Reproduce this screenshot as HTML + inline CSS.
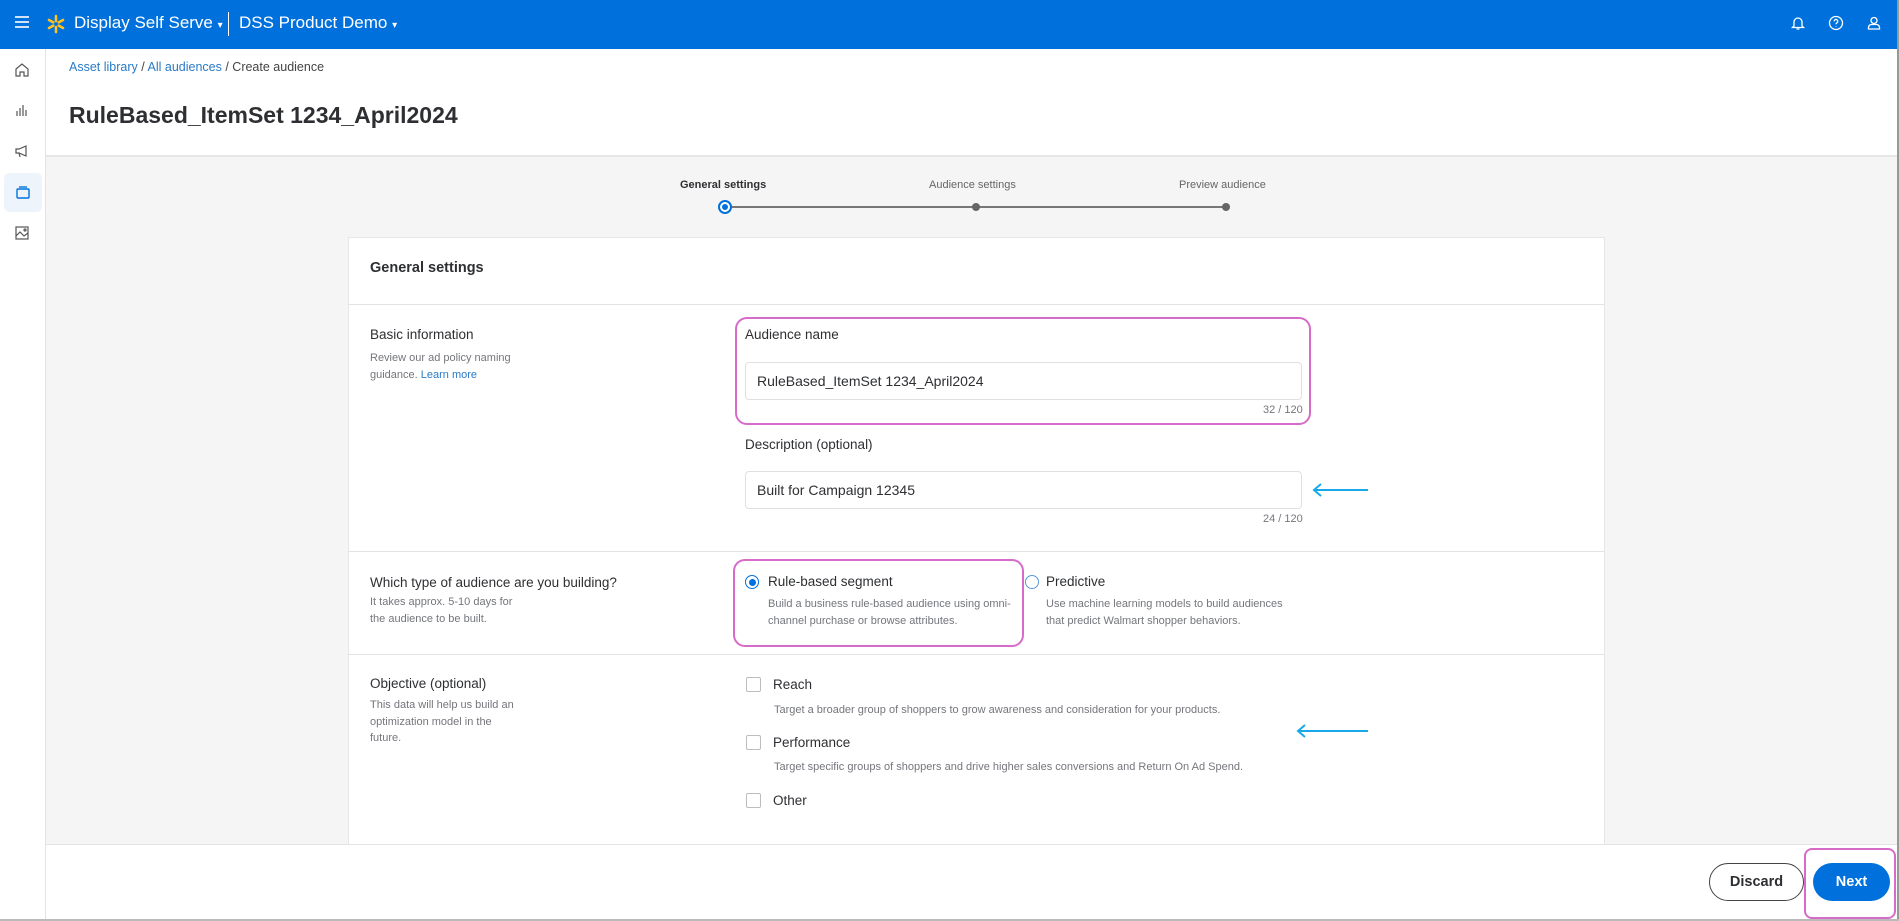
<!DOCTYPE html>
<html><head><meta charset="utf-8"><style>
*{box-sizing:border-box;margin:0;padding:0}
body{width:1899px;height:921px;overflow:hidden;background:#f5f5f5;font-family:"Liberation Sans",sans-serif;color:#2e2f32;position:relative}
.a{position:absolute;white-space:nowrap}
.top{left:0;top:0;width:1899px;height:49px;background:#0071dc;color:#fff}
.side{left:0;top:49px;width:46px;height:872px;background:#fff;border-right:1px solid #e3e3e3}
.hdr{left:46px;top:49px;width:1851px;height:108px;background:#fff;border-bottom:2px solid #e6e6e6}
.card{left:348px;top:237px;width:1257px;height:607px;background:#fff;border:1px solid #e6e6e6;border-bottom:none}
.hr{position:absolute;left:348px;width:1257px;height:1px;background:#e3e3e3}
.lbl{font-size:13.5px;color:#2e2f32}
.sub{font-size:11px;color:#74767c;line-height:16.5px}
.inp{border:1px solid #e0e0e0;border-radius:4px;background:#fff;width:557px;height:38px;font-size:14px;padding:10px 11px;color:#2e2f32}
.cnt{font-size:11px;color:#74767c}
.pink{border:2px solid #d66bc8;border-radius:12px}
.cb{width:15px;height:15px;border:1px solid #bdbdbd;border-radius:2px;background:#fff}
.foot{left:46px;top:844px;width:1851px;height:77px;background:#fff;border-top:1px solid #e3e3e3}
</style></head><body>
<div class="a top">
 <div class="a" style="left:15px;top:16px;width:14px;height:2px;background:#cfe2f7;box-shadow:0 5px 0 #cfe2f7,0 10px 0 #cfe2f7"></div>
 <svg class="a" style="left:46px;top:14px" width="20" height="20" viewBox="0 0 20 20"><g stroke="#ffc220" stroke-width="2.6" stroke-linecap="round"><line x1="10" y1="2" x2="10" y2="7"/><line x1="10" y1="13" x2="10" y2="18"/><line x1="3" y1="6" x2="7.3" y2="8.4"/><line x1="12.7" y1="11.6" x2="17" y2="14"/><line x1="3" y1="14" x2="7.3" y2="11.6"/><line x1="12.7" y1="8.4" x2="17" y2="6"/></g></svg>
 <div class="a" style="left:74px;top:13px;font-size:17px">Display Self Serve <span style="font-size:10px">▾</span></div>
 <div class="a" style="left:228px;top:12px;width:1px;height:24px;background:#fff"></div>
 <div class="a" style="left:239px;top:13px;font-size:17px">DSS Product Demo <span style="font-size:10px">▾</span></div>
 <svg class="a" style="left:1790px;top:15px" width="16" height="16" viewBox="0 0 16 16" fill="none" stroke="#fff" stroke-width="1.3"><path d="M4 11V7a4 4 0 018 0v4l1.5 1.5h-11z M6.5 14h3"/></svg>
 <svg class="a" style="left:1828px;top:15px" width="16" height="16" viewBox="0 0 16 16" fill="none" stroke="#fff" stroke-width="1.3"><circle cx="8" cy="8" r="6.5"/><path d="M6.2 6.3a1.8 1.8 0 113 1.3c-.8.5-1.2.8-1.2 1.6M8 11v.5"/></svg>
 <svg class="a" style="left:1866px;top:15px" width="16" height="16" viewBox="0 0 16 16" fill="none" stroke="#fff" stroke-width="1.3"><circle cx="8" cy="5.5" r="3"/><path d="M2.5 14v-1.5a3 3 0 013-3h5a3 3 0 013 3V14z"/></svg>
</div>
<div class="a side">
 <svg class="a" style="left:14px;top:13px" width="16" height="16" viewBox="0 0 16 16" fill="none" stroke="#555" stroke-width="1.2"><path d="M2 7l6-5 6 5v7H10v-4H6v4H2z"/></svg>
 <svg class="a" style="left:15px;top:54px" width="14" height="14" viewBox="0 0 14 14" fill="none" stroke="#555" stroke-width="1.2"><path d="M2 13V8M5 13V5M8 13V2M11 13V7"/></svg>
 <svg class="a" style="left:14px;top:94px" width="16" height="16" viewBox="0 0 16 16" fill="none" stroke="#555" stroke-width="1.2"><path d="M2 6h3l7-3v10l-7-3H2z M5 10l1 4"/></svg>
 <div class="a" style="left:4px;top:124px;width:38px;height:39px;background:#eef4fb;border-radius:5px"></div>
 <svg class="a" style="left:15px;top:135px" width="16" height="16" viewBox="0 0 16 16" fill="none" stroke="#0071dc" stroke-width="1.4"><rect x="2" y="5" width="12" height="9" rx="1"/><path d="M4 3h8"/></svg>
 <svg class="a" style="left:14px;top:176px" width="16" height="16" viewBox="0 0 16 16" fill="none" stroke="#555" stroke-width="1.2"><rect x="2" y="2" width="12" height="12"/><path d="M2 11l4-4 4 4 4-3"/><circle cx="11" cy="5" r="1"/></svg>
</div>
<div class="a hdr">
 <div class="a" style="left:23px;top:11px;font-size:12.5px;color:#444"><span style="color:#2a7ac6">Asset library</span> / <span style="color:#2a7ac6">All audiences</span> / Create audience</div>
 <div class="a" style="left:23px;top:53px;font-size:23px;color:#2e2f32;font-weight:bold">RuleBased_ItemSet 1234_April2024</div>
</div>
<div class="a" style="left:680px;top:179px;font-size:11px;font-weight:bold;color:#2e2f32">General settings</div>
<div class="a" style="left:929px;top:179px;font-size:11px;color:#666">Audience settings</div>
<div class="a" style="left:1179px;top:179px;font-size:11px;color:#666">Preview audience</div>
<div class="a" style="left:726px;top:206px;width:500px;height:2px;background:#777"></div>
<div class="a" style="left:718px;top:200px;width:14px;height:14px;border-radius:50%;border:2px solid #0071dc;background:#fff"></div>
<div class="a" style="left:722px;top:204px;width:6px;height:6px;border-radius:50%;background:#0071dc"></div>
<div class="a" style="left:972px;top:203px;width:8px;height:8px;border-radius:50%;background:#666"></div>
<div class="a" style="left:1222px;top:203px;width:8px;height:8px;border-radius:50%;background:#666"></div>
<div class="a card"></div>
<div class="a" style="left:370px;top:260px;font-size:14.5px;font-weight:bold">General settings</div>
<div class="hr" style="top:304px"></div>
<div class="a lbl" style="left:370px;top:327px">Basic information</div>
<div class="a sub" style="left:370px;top:350px">Review our ad policy naming<br>guidance. <span style="color:#2a7ac6">Learn more</span></div>
<div class="a pink" style="left:735px;top:317px;width:576px;height:108px"></div>
<div class="a lbl" style="left:745px;top:327px">Audience name</div>
<div class="a inp" style="left:745px;top:362px">RuleBased_ItemSet 1234_April2024</div>
<div class="a cnt" style="left:1263px;top:404px">32 / 120</div>
<div class="a lbl" style="left:745px;top:437px">Description (optional)</div>
<div class="a inp" style="left:745px;top:471px">Built for Campaign 12345</div>
<div class="a cnt" style="left:1263px;top:513px">24 / 120</div>
<svg class="a" style="left:1310px;top:482px" width="60" height="16"><path d="M58 8H4M11 2L4 8l7 6" fill="none" stroke="#1aa9e8" stroke-width="2"/></svg>
<div class="hr" style="top:551px"></div>
<div class="a lbl" style="left:370px;top:575px;font-weight:500">Which type of audience are you building?</div>
<div class="a sub" style="left:370px;top:594px">It takes approx. 5-10 days for<br>the audience to be built.</div>
<div class="a pink" style="left:733px;top:559px;width:291px;height:88px"></div>
<div class="a" style="left:745px;top:575px;width:14px;height:14px;border-radius:50%;border:1.5px solid #0071dc"></div>
<div class="a" style="left:748.5px;top:578.5px;width:7px;height:7px;border-radius:50%;background:#0071dc"></div>
<div class="a lbl" style="left:768px;top:574px">Rule-based segment</div>
<div class="a sub" style="left:768px;top:596px">Build a business rule-based audience using omni-<br>channel purchase or browse attributes.</div>
<div class="a" style="left:1025px;top:575px;width:14px;height:14px;border-radius:50%;border:1.5px solid #5a9ad6"></div>
<div class="a lbl" style="left:1046px;top:574px">Predictive</div>
<div class="a sub" style="left:1046px;top:596px">Use machine learning models to build audiences<br>that predict Walmart shopper behaviors.</div>
<div class="hr" style="top:654px"></div>
<div class="a lbl" style="left:370px;top:676px">Objective (optional)</div>
<div class="a sub" style="left:370px;top:697px">This data will help us build an<br>optimization model in the<br>future.</div>
<div class="a cb" style="left:746px;top:677px"></div>
<div class="a lbl" style="left:773px;top:677px">Reach</div>
<div class="a sub" style="left:774px;top:702px">Target a broader group of shoppers to grow awareness and consideration for your products.</div>
<div class="a cb" style="left:746px;top:735px"></div>
<div class="a lbl" style="left:773px;top:735px">Performance</div>
<div class="a sub" style="left:774px;top:759px">Target specific groups of shoppers and drive higher sales conversions and Return On Ad Spend.</div>
<div class="a cb" style="left:746px;top:793px"></div>
<div class="a lbl" style="left:773px;top:793px">Other</div>
<svg class="a" style="left:1294px;top:723px" width="76" height="16"><path d="M74 8H4M11 2L4 8l7 6" fill="none" stroke="#1aa9e8" stroke-width="2"/></svg>
<div class="a foot"></div>
<div class="a" style="left:1709px;top:863px;width:95px;height:38px;border:1px solid #444;border-radius:19px;background:#fff;font-size:14.5px;font-weight:bold;text-align:center;line-height:36px">Discard</div>
<div class="a" style="left:1813px;top:863px;width:77px;height:38px;border-radius:19px;background:#0071dc;color:#fff;font-size:14.5px;font-weight:bold;text-align:center;line-height:38px">Next</div>
<div class="a pink" style="left:1804px;top:848px;width:92px;height:71px;border-radius:8px"></div>
<div class="a" style="left:1897px;top:0;width:2px;height:921px;background:#999"></div>
<div class="a" style="left:0;top:919px;width:1899px;height:2px;background:#bbb"></div>
</body></html>
